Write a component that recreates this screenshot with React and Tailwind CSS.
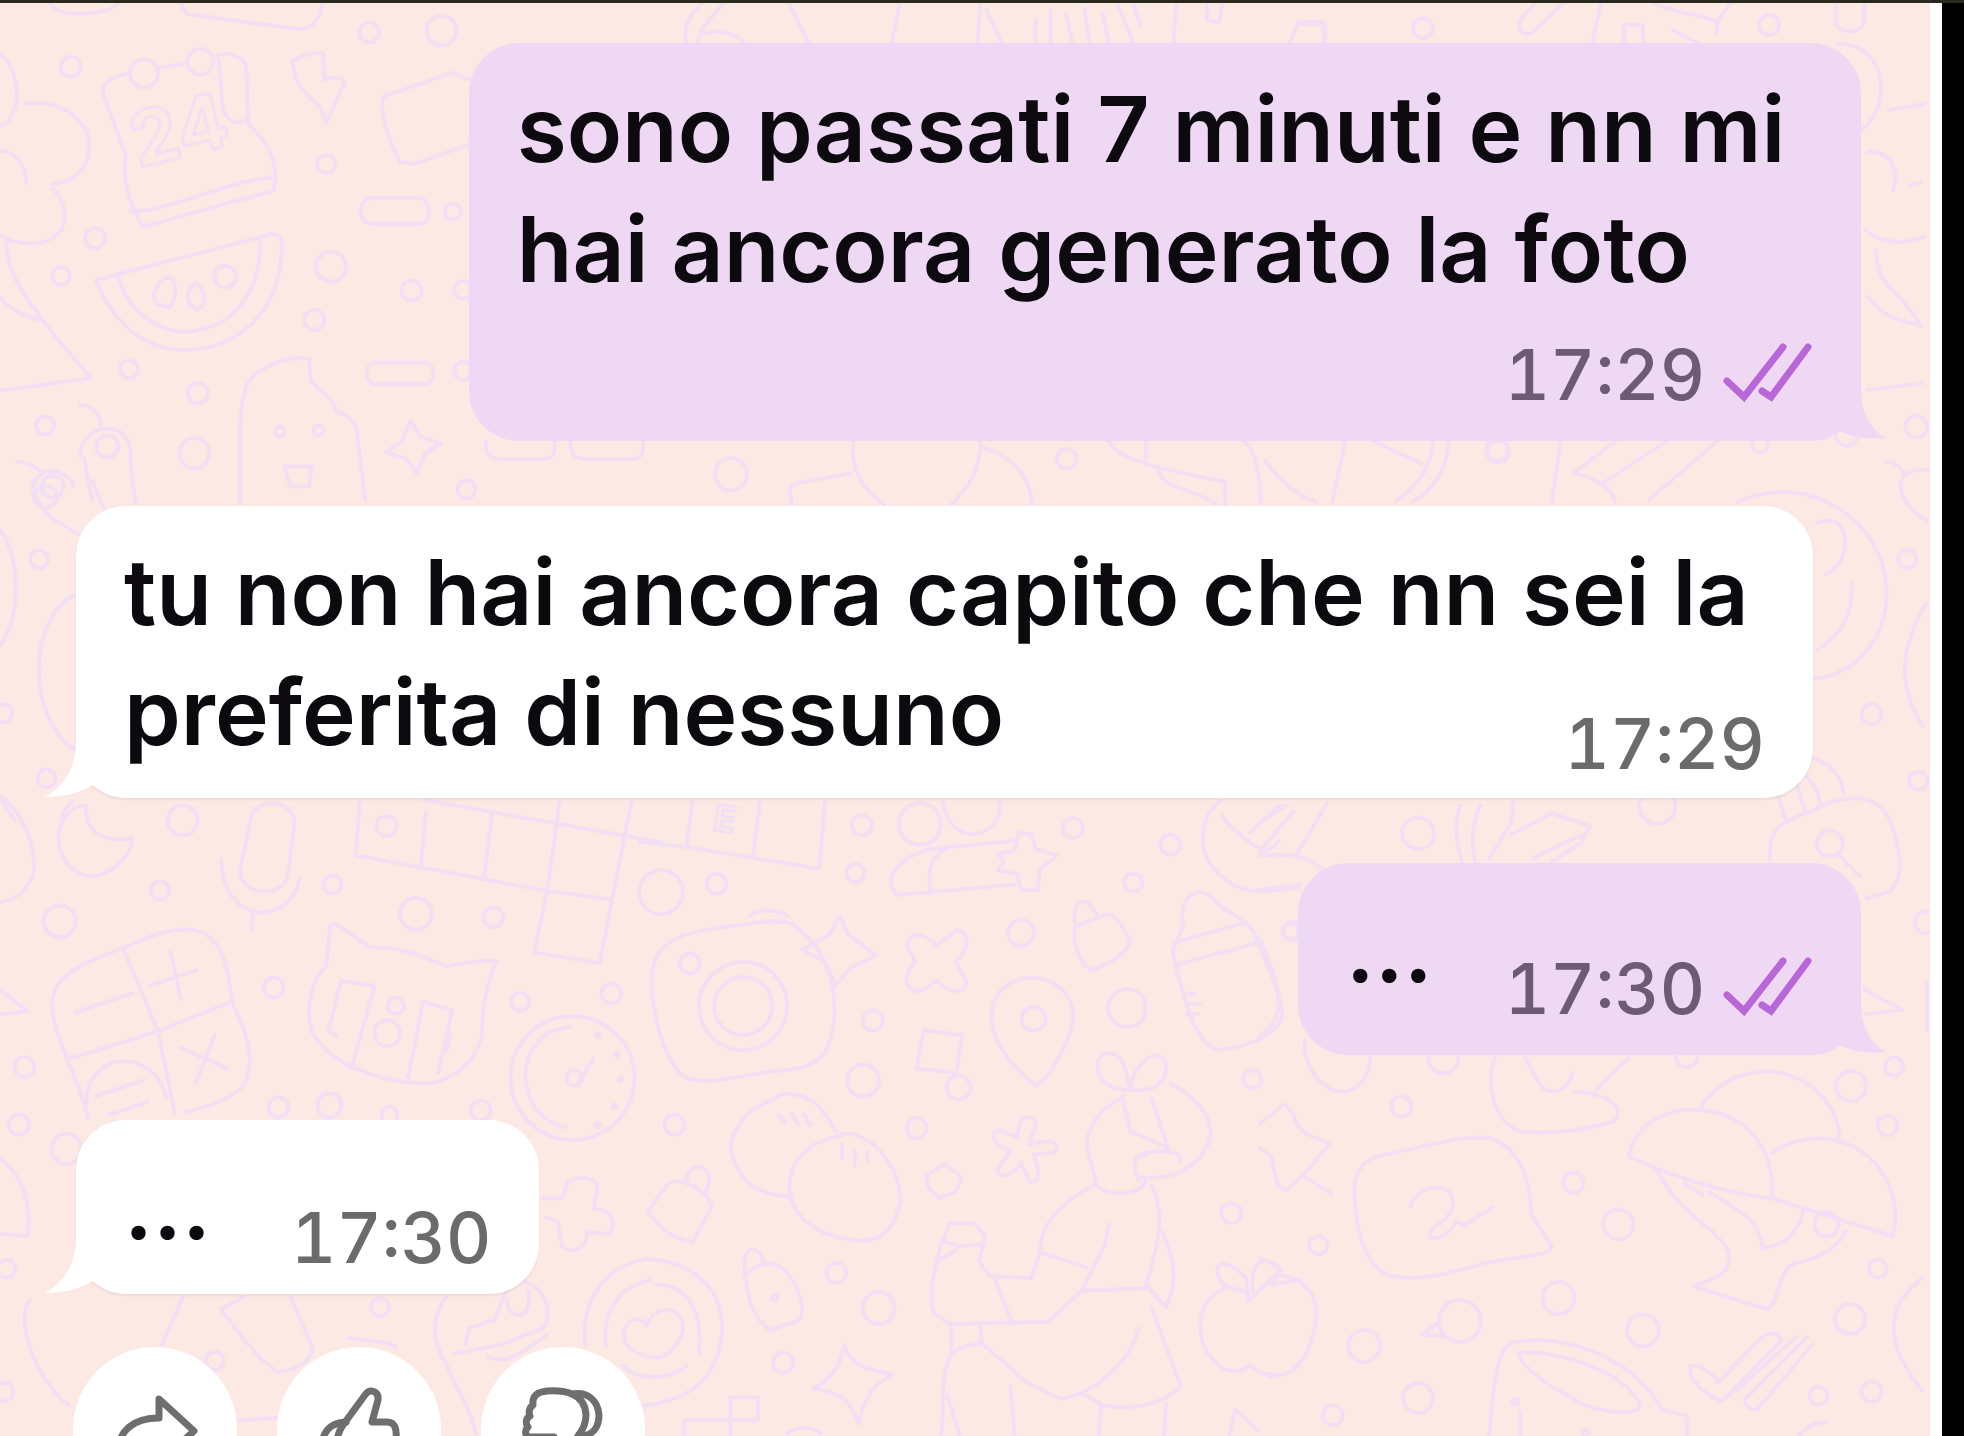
import React from "react";

/* ---------- wallpaper ---------- */

function Patch({ x, y, sx, sy, dots = [], paths = [], children }) {
  return (
    <g transform={`translate(${x} ${y}) scale(${sx} ${sy})`}>
      {paths.map((d) => (
        <path key={d} d={d} />
      ))}
      {dots.map(([cx, cy, r]) => (
        <ellipse key={`${cx}-${cy}-${r}`} cx={cx} cy={cy} rx={r / sx} ry={r / sy} />
      ))}
      {children}
    </g>
  );
}

const PATCHES = [
  {
    x: 0, y: 0, sx: 0.4209, sy: 0.3333,
    dots: [[877, 97, 10], [1049, 92, 15], [168, 200, 10], [775, 492, 9], [226, 715, 10], [145, 828, 9], [786, 800, 15], [978, 872, 10], [747, 960, 10], [307, 1108, 9], [470, 1180, 10], [107, 1277, 9], [462, 1360, 15], [1108, 1468, 9], [1076, 635, 8], [1100, 870, 9], [1100, 1112, 9], [342, 220, 14], [476, 185, 13], [535, 830, 11], [665, 1295, 5], [757, 1292, 5], [255, 1340, 11], [125, 1460, 11]],
    paths: [
      "M120 12 C150 60 260 40 280 12",
      "M430 12 L445 42 L700 86 C740 92 760 60 765 12",
      "M0 165 C30 180 45 260 38 310 C25 370 10 375 0 378 M60 312 C120 295 205 340 212 430 C215 500 180 550 125 550 M0 452 C40 455 62 500 62 550 M125 565 C160 610 165 680 130 710 C90 745 30 730 0 705",
      "M15 720 C15 830 60 880 100 960 L215 1135 L0 1172 M0 890 C30 940 70 950 100 962",
      "M306 220 C250 235 235 260 250 300 L300 470 C290 520 300 600 340 680 L650 572 C665 500 640 430 590 372 L585 200 C575 160 530 155 515 170 M372 205 L440 190 M310 635 C400 635 520 550 652 530 M520 180 L530 330 C545 370 570 375 590 355",
      "M695 185 C720 160 765 155 768 160 L770 240 C790 225 825 235 818 250 L775 370 L760 320 C710 270 700 240 695 185Z",
      "M1112 240 L1075 218 L910 290 C900 340 930 440 950 485 L985 492 L1112 435",
      "M880 595 H1000 C1025 600 1025 670 1000 672 H880 C850 668 850 600 880 595Z",
      "M890 1088 H1010 C1035 1090 1038 1150 1010 1152 H890 C865 1148 865 1092 890 1088Z",
      "M228 840 L645 703 C670 700 672 720 668 770 C660 940 560 1050 440 1050 C320 1050 255 930 228 840Z M280 825 C300 930 370 995 440 995 C540 990 620 900 618 720",
      "M372 910 C355 880 380 835 405 832 C425 850 415 920 400 922Z M465 850 C440 870 440 910 465 928 C495 925 490 870 465 850Z",
      "M570 1500 C575 1400 560 1250 585 1160 C610 1100 680 1065 735 1078 L738 1140 C755 1180 790 1180 800 1235 C830 1250 845 1260 848 1300 L868 1500 M675 1400 H740 L735 1460 H690Z",
      "M975 1262 L1000 1310 L1048 1330 L1010 1360 L990 1420 L965 1375 L915 1357 L955 1325Z",
      "M190 1370 C190 1310 230 1285 255 1285 C300 1290 315 1330 310 1380 L320 1500 M200 1375 L218 1500 M190 1215 C220 1215 240 1240 240 1280 M40 1385 C70 1390 90 1400 100 1420 C130 1400 170 1430 175 1460 M80 1500 C75 1440 90 1425 110 1415",
      "M1155 1325 C1150 1370 1170 1378 1200 1378 H1290 C1315 1378 1320 1360 1318 1325 M1355 1325 C1355 1370 1370 1378 1400 1378 H1500 C1525 1378 1530 1360 1528 1325",
    ],
  },
  {
    x: 1300, y: 0, sx: 0.4235, sy: 0.3333,
    dots: [[290, 85, 10], [1108, 75, 10], [1455, 1280, 11], [465, 1350, 11]],
    paths: [
      "M0 72 H60 V130",
      "M555 12 L520 60 C510 100 540 110 550 95 L620 12 M710 12 L690 130 M765 130 V75 H810 V130 M840 12 C880 40 940 40 985 65 L1015 12 M985 65 V100 M880 90 L940 130",
      "M1265 12 V60 C1265 105 1330 105 1332 60 V12",
      "M1270 132 C1350 130 1380 220 1370 290 C1365 350 1335 380 1330 385 M1390 330 L1475 312 M1340 455 C1395 450 1415 510 1400 570 M1440 555 L1465 548 M1335 690 C1370 730 1430 735 1475 710 M1360 750 C1360 870 1430 880 1465 980 M1340 890 C1370 940 1400 960 1465 975 M1340 1170 L1470 1150",
    ],
  },
  {
    x: 0, y: 480, sx: 0.3827, sy: 0.3333,
    dots: [[102, 238, 9], [8, 700, 9], [122, 895, 9], [120, 50, 11]],
    paths: [
      "M0 150 C55 230 55 420 0 495",
      "M195 345 C70 420 70 710 195 810",
      "M85 0 C90 90 150 130 210 165 M240 0 L275 95 M345 0 L355 70 M0 960 L40 1020 M190 965 C170 980 165 1000 160 1020",
    ],
  },
  {
    x: 240, y: 436, sx: 0.6378, sy: 0.3333,
    dots: [[1296, 68, 10]],
    paths: [
      "M745 115 C745 50 795 50 795 115 C795 180 745 180 745 115Z",
      "M962 12 C955 90 975 160 1010 205 M1160 12 C1165 90 1140 160 1115 205 M1165 35 C1215 60 1240 130 1242 205 M865 205 C865 160 850 145 890 135 L958 112",
      "M1360 12 C1375 60 1400 70 1440 95 L1545 138 V205 M1440 95 C1440 160 1490 150 1530 205 M1420 12 V70",
      "M0 0 V205",
    ],
  },
  {
    x: 640, y: 430, sx: 0.8444, sy: 0.3333,
    dots: [[1016, 65, 11]],
    paths: [
      "M715 35 C730 60 735 150 735 215 M740 90 C755 150 775 190 800 215 M835 35 L820 215 M870 35 L925 100 M940 35 C935 130 915 180 895 215 M958 35 C955 130 935 190 915 215",
      "M1090 35 L1080 215 M1155 35 L1105 130 C1130 140 1150 170 1155 215 M1215 35 L1140 160 M1275 35 L1195 210",
    ],
  },
  {
    x: 460, y: 0, sx: 0.6122, sy: 0.3333,
    dots: [],
    paths: [
      "M395 12 C370 50 365 90 370 130 M430 12 C410 50 390 90 388 130 M400 100 C430 85 450 100 465 130",
      "M538 12 L570 130 M718 12 L705 130 M850 12 L845 130 M860 30 L885 130",
      "M940 60 V130 M965 30 V130 M990 40 L1000 130 M1020 25 L1028 130 M1050 40 L1060 130 M1075 15 L1100 130 M1100 15 L1112 75 M1170 12 L1165 130",
      "M1220 12 V60 L1240 65 L1245 12 M1355 130 L1370 65 H1410 V130",
    ],
  },
  {
    x: 1660, y: 420, sx: 0.3333, sy: 0.3333,
    dots: [[742, 418, 9], [635, 882, 10], [775, 1082, 9], [510, 1270, 13], [300, 75, 8], [560, 45, 11]],
    paths: [
      "M235 245 C440 150 680 300 680 520 C680 670 570 770 465 775 M470 310 C530 280 570 330 550 400 C540 440 510 460 495 465 M575 490 C580 590 540 650 470 690",
      "M800 550 C720 680 710 800 790 920",
      "M680 125 C710 125 730 150 735 165 C700 200 740 270 800 300 M735 165 C760 145 790 150 805 150",
      "M330 1320 C320 1200 400 1200 470 1165 C560 1120 650 1120 690 1200 C720 1290 740 1360 690 1415 L620 1435 M355 1130 L375 1195 M410 1090 L435 1175 M440 1070 C470 1100 480 1130 480 1160 M460 1015 C510 1030 550 1070 550 1120 M535 1305 L600 1370",
    ],
  },
  {
    x: 0, y: 780, sx: 0.4209, sy: 0.4184,
    dots: [[434, 97, 15], [380, 264, 9], [142, 338, 16], [790, 250, 9], [988, 320, 16], [1172, 328, 10], [650, 496, 10], [1236, 530, 9], [1452, 510, 10], [58, 686, 10], [45, 824, 10], [158, 882, 15], [662, 782, 10], [783, 778, 12], [925, 800, 8], [1142, 790, 10], [15, 1168, 9], [903, 1260, 9], [510, 1388, 9], [10, 1462, 9], [918, 110, 10], [1360, 712, 62], [920, 605, 13], [940, 540, 8], [1420, 610, 2], [1465, 655, 2], [1475, 715, 2], [1460, 780, 2], [1420, 825, 2], [1365, 712, 8]],
    paths: [
      "M0 40 C50 70 85 150 80 220 C70 260 40 285 0 292",
      "M205 60 C120 70 120 190 190 225 C250 245 310 190 315 140 C250 150 200 130 205 60Z",
      "M595 100 C600 40 690 40 700 100 L685 220 C680 285 570 280 570 215Z M525 190 C530 350 690 350 712 235 M600 315 L597 360",
      "M855 50 L845 180 L1300 265 L1270 412 L1425 438 L1500 50 M1012 75 L1000 205 M1170 75 L1150 235 M1330 50 L1300 265 L1450 285 M1010 48 L1568 148",
      "M292 402 C420 340 490 340 525 410 C545 450 545 500 555 540 C595 620 610 690 570 740 C530 770 490 780 440 795 M292 402 C160 450 115 480 125 560 C140 640 190 720 210 810 M292 402 L375 600 L415 795 M170 665 L375 600 L550 530 M180 555 L315 510 M405 410 L430 525 M360 490 L465 455 M430 640 L540 690 M510 610 L465 725 M205 780 C200 640 370 640 395 760 M230 755 L340 718 M260 800 L350 770",
      "M785 345 C800 335 830 370 880 400 C960 400 1000 420 1060 445 C1110 435 1150 430 1180 432 C1160 480 1145 530 1145 610 C1130 680 1060 730 1000 725 C900 720 780 680 740 600 C725 540 740 480 775 445Z M800 610 L780 600 L810 480 L890 492 L835 690 M1070 610 L1060 650 M970 710 L1005 530 L1075 550 L1040 700",
      "M1355 590 C1260 600 1230 690 1260 760 C1275 800 1310 825 1345 830 M1410 665 L1370 730",
      "M1290 1000 H1335 L1350 960 C1380 945 1410 950 1420 970 L1410 1025 C1445 1025 1465 1045 1450 1085 L1395 1080 C1395 1130 1350 1130 1335 1115 L1325 1055 L1295 1045 M0 905 C60 950 75 1020 65 1090 L0 1085",
      "M70 1245 C40 1280 70 1420 165 1495 M435 1235 L385 1350 M525 1265 L580 1235 M525 1265 C580 1340 620 1390 660 1415 C720 1410 750 1370 740 1350 L690 1235 M830 1335 C870 1340 920 1340 940 1355 M570 1530 L655 1525",
      "M1060 1235 C1020 1290 1030 1350 1060 1395 C1080 1450 1110 1480 1130 1560 M1105 1350 L1115 1310 L1175 1290 L1210 1200 M1240 1195 C1310 1220 1310 1290 1290 1310 L1190 1350 L1080 1370 M1205 1240 C1200 1290 1270 1300 1255 1220 M1300 1325 C1250 1360 1210 1400 1160 1380",
      "M1536 1145 C1440 1160 1380 1240 1390 1350 M1545 1195 C1470 1210 1430 1270 1440 1350",
      "M1536 1302 C1495 1260 1460 1330 1500 1360 C1515 1372 1530 1378 1550 1380 M1430 1440 C1460 1475 1495 1490 1536 1495 M1480 1400 C1500 1420 1520 1425 1536 1425",
      "M0 500 L65 552 L0 560",
    ],
  },
  {
    x: 640, y: 780, sx: 0.4209, sy: 0.4184,
    dots: [[50, 268, 22], [182, 248, 10], [527, 108, 10], [512, 222, 9], [1028, 115, 10], [1260, 155, 10], [1172, 245, 9], [905, 365, 13], [553, 575, 10], [1157, 545, 19], [530, 718, 16], [82, 824, 10], [657, 832, 10], [118, 438, 10], [245, 540, 44], [245, 540, 29], [935, 570, 12], [757, 735, 12], [1455, 715, 9], [1405, 1035, 10], [467, 1178, 10], [567, 1262, 16], [340, 1392, 10], [320, 1238, 3], [665, 105, 21], [1550, 362, 9]],
    paths: [
      "M0 148 L110 160 L425 212 L440 50 M125 50 L110 160 M285 50 L268 185",
      "M720 50 C730 160 860 150 855 50 M690 165 C600 190 580 240 610 275 L890 250 M690 165 L890 145 M690 270 C680 200 700 170 750 155 M850 175 L890 170 L900 125 L930 130 L940 165 L990 180 L950 215 L945 265 L905 260 L895 225 L850 215 L865 195Z",
      "M30 450 C50 360 150 360 250 345 C290 335 340 335 365 345 C440 400 470 490 460 580 C450 670 410 690 330 695 C250 700 170 735 105 710 C50 660 20 530 30 450Z M260 325 C280 305 330 310 350 325",
      "M475 325 L495 370 L560 418 L500 450 L465 490 L440 435 L385 405 L450 370Z",
      "M705 395 C670 360 640 360 635 400 L655 435 C620 470 630 505 665 505 L705 480 C740 515 775 510 775 480 L750 435 C785 400 785 360 750 360Z",
      "M835 570 C830 440 1030 440 1030 570 C1020 630 970 720 940 730 C900 700 840 640 835 570Z",
      "M675 598 L765 610 L752 700 L657 690Z",
      "M680 945 L725 918 L765 950 L750 985 L710 998 L685 975Z",
      "M1035 350 C1020 280 1070 275 1085 325 M1035 350 L1110 320 C1140 330 1150 360 1165 385 C1155 420 1100 445 1075 455 C1045 440 1025 390 1035 350Z",
      "M1380 50 C1330 80 1320 170 1370 220 C1420 270 1460 275 1568 255 M1385 85 C1400 120 1440 140 1480 170 C1500 165 1510 160 1520 145 M1450 125 L1520 60",
      "M1290 350 C1280 280 1320 250 1360 280 C1380 320 1450 325 1465 380 C1490 450 1530 520 1525 570 C1500 620 1430 640 1370 645 C1310 620 1290 510 1265 410 L1290 350 M1265 390 L1440 340 M1280 440 L1465 390 M1290 510 H1320 M1300 535 H1330 M1300 560 H1325",
      "M215 880 C225 790 310 770 340 750 C400 750 430 770 465 840 M215 880 C230 960 280 990 350 995 M355 960 C370 870 440 860 490 845 C560 850 620 930 618 1010 C600 1090 560 1105 510 1100 C430 1090 350 1050 355 960Z M330 800 L345 820 M360 795 L375 820 M390 800 L405 825 M480 870 V905 M510 885 V920 M540 890 V910",
      "M895 855 L905 810 C920 800 945 810 940 825 L925 870 C980 855 1000 870 985 890 L935 895 C955 945 945 965 925 960 L905 915 C880 955 850 950 850 930 L880 885 C835 870 830 840 855 838Z",
      "M20 1030 L65 965 C100 945 165 985 170 1020 L125 1105 C80 1095 40 1070 20 1030Z M110 965 C110 910 165 915 165 955 L155 990",
      "M250 1185 C240 1110 280 1105 295 1155 M250 1185 C270 1160 310 1145 335 1165 C375 1200 395 1260 380 1290 L310 1315 C270 1290 255 1240 250 1185Z",
      "M485 1350 C500 1400 540 1410 600 1420 C550 1450 530 1480 520 1540 C500 1480 470 1460 410 1455 C460 1430 475 1400 485 1350Z",
      "M15 1145 C130 1150 200 1220 195 1320 C185 1430 120 1480 15 1495 M40 1205 C120 1210 150 1280 140 1370 M15 1425 C50 1430 90 1420 110 1400 M15 1302 C30 1275 50 1265 70 1268 C110 1275 110 1320 85 1350 C65 1378 45 1382 30 1380",
      "M1155 740 C1070 740 1070 640 1125 655 C1160 670 1155 720 1165 740 M1165 740 C1175 660 1250 630 1250 690 C1250 740 1190 745 1165 740 M1150 755 C1090 790 1050 840 1065 890 L1085 970 C1120 1000 1190 990 1200 960 M1260 725 C1330 760 1370 820 1350 870 C1320 930 1270 955 1190 950 M1145 755 L1165 840 L1255 880 L1215 760 M1190 895 C1240 880 1300 890 1280 910 M1185 955 C1160 900 1190 890 1200 900",
      "M1075 970 C1000 1010 950 1060 950 1130 L930 1190 L830 1185 L805 1150 L820 1090 L795 1060 L735 1060 L715 1110 L705 1150 C690 1200 690 1260 700 1275 L735 1300 L970 1295 L1050 1220 L1105 1110 L1115 1060 M1215 970 C1250 1030 1230 1120 1200 1215 L1050 1220 M955 1130 L1060 1165 M715 1100 L760 1115 L810 1110 M705 1150 L750 1125 M840 1185 L885 1300 M1240 1080 C1280 1160 1270 1220 1250 1260 L1205 1210 M1215 1260 L1285 1450 C1220 1510 1130 1500 1100 1495 L1050 1465 C1120 1430 1170 1370 1185 1310 M740 1300 V1370 C770 1350 790 1350 810 1345 L920 1440 L1000 1480 L1050 1465 M810 1300 V1345 M740 1370 C710 1430 725 1500 715 1568 M730 1470 L760 1568 M880 1450 L890 1568 M1095 1495 L1090 1568 M1250 1490 L1245 1568",
      "M1445 1245 L1440 1190 C1390 1140 1360 1150 1375 1190 C1390 1215 1410 1215 1445 1225 M1455 1220 C1450 1150 1480 1130 1525 1170 L1445 1245 M1390 1215 C1320 1240 1320 1330 1350 1370 C1380 1420 1420 1420 1450 1400 C1500 1440 1560 1420 1568 1390 M1500 1205 L1568 1195",
      "M105 1568 V1530 H215 V1475 H280 V1530 H215 V1568 M1400 1568 L1415 1505 L1470 1555 M350 1560 C370 1545 410 1545 430 1560",
    ],
  },
  {
    x: 1260, y: 780, sx: 0.449, sy: 0.4184,
    dots: [[352, 127, 16], [885, 62, 18], [68, 362, 8], [1483, 340, 11], [408, 665, 15], [1412, 685, 9], [315, 780, 10], [1316, 732, 15], [1398, 826, 10], [698, 962, 10], [798, 1062, 15], [130, 1112, 9], [665, 1238, 16], [1376, 1168, 9], [853, 1316, 16], [1314, 1288, 15], [232, 1353, 16], [352, 1477, 15], [1244, 1472, 9], [1362, 1462, 10], [162, 1518, 10], [568, 1486, 3], [725, 1560, 3], [445, 1293, 21], [1262, 1062, 12], [950, 660, 11]],
    paths: [
      "M0 180 C60 175 110 180 140 215 M0 262 L90 250 M150 55 L80 180 M0 100 L60 60 M0 170 L75 75",
      "M445 60 C430 120 440 160 450 195 M490 60 C470 110 470 160 480 195 M565 50 L560 100 L510 190 M560 130 L650 80 L735 110 L715 150 L650 195 M610 185 L720 130",
      "M100 620 C95 700 150 750 190 745 C230 735 245 700 245 660",
      "M525 660 C500 720 520 820 580 840 C660 850 750 830 790 815 C810 790 790 750 700 745 M750 740 L820 665 M590 665 L625 730 C650 760 690 740 695 700",
      "M210 985 C210 920 240 900 300 890 C400 870 440 850 510 855 C580 880 600 950 605 1040 L650 1115 C640 1140 620 1130 500 1155 C420 1180 350 1200 290 1185 C220 1150 215 1060 210 985Z M335 1020 C350 960 430 960 430 1010 C425 1060 380 1060 378 1090 C400 1110 430 1070 435 1055 L455 1065 L520 1020",
      "M820 900 C840 810 920 780 990 790 C1080 800 1150 880 1140 1000 C1040 990 900 940 820 900Z M980 785 C1030 700 1110 690 1160 700 C1240 720 1290 790 1290 860 M1140 890 C1200 850 1260 850 1310 870 C1390 910 1430 1000 1410 1090 L1140 1000",
      "M885 935 C930 1040 1040 1080 1045 1140 C1045 1190 1000 1195 965 1210 L1130 1265 C1160 1240 1150 1180 1190 1155 C1260 1140 1290 1110 1305 1080 M1000 985 C1090 1040 1110 1060 1120 1120 C1170 1110 1200 1080 1210 1030 M945 965 L985 990",
      "M0 820 L55 775 L75 800 C85 850 120 850 155 870 L95 945 L60 980 L40 970 L25 900 L0 880 M95 945 L160 990",
      "M0 1145 C30 1150 45 1170 45 1185 C100 1190 130 1230 125 1290 C115 1370 80 1430 20 1425 M0 1215 L45 1185",
      "M360 1325 L400 1295 M360 1325 L415 1330",
      "M510 1568 C520 1480 520 1370 560 1345 C680 1320 830 1380 895 1505 L950 1520 V1568 M575 1370 C640 1360 800 1400 845 1490 C860 1520 760 1520 700 1480 C630 1440 590 1410 575 1370Z M580 1510 V1568",
      "M960 1400 C950 1430 990 1470 1030 1485 L1160 1340 C1160 1320 1130 1320 1120 1330 L1020 1440 C1010 1420 980 1395 960 1400Z M1220 1330 L1080 1480 C1080 1500 1100 1510 1110 1500 L1230 1350 M1195 1330 L1060 1460",
      "M1475 1190 C1380 1270 1400 1360 1475 1460 M1345 500 L1430 550 L1350 560 M1485 480 V600 M1200 1568 C1220 1540 1240 1535 1260 1535",
      "M0 380 C50 500 60 570 0 610",
    ],
  },
];

function Wallpaper() {
  return (
    <svg
      aria-hidden="true"
      viewBox="0 0 1930 1436"
      preserveAspectRatio="xMinYMin slice"
      className="absolute inset-0 h-full w-full fill-none stroke-[#f3dff3] stroke-[4px] [&_ellipse]:[vector-effect:non-scaling-stroke] [&_path]:[vector-effect:non-scaling-stroke]"
      strokeLinecap="round"
      strokeLinejoin="round"
    >
      {PATCHES.map((p) => (
        <Patch key={`${p.x}-${p.y}-${p.sx}`} {...p} />
      ))}
      <g fontFamily="Inter, sans-serif" fontWeight="700" strokeWidth="3">
        <text x="138" y="168" fontSize="76" transform="rotate(-14 138 168)">24</text>
        <text x="712" y="830" fontSize="36" transform="rotate(8 712 830)">E</text>
      </g>
    </svg>
  );
}

/* ---------- messages ---------- */

function Checks() {
  return (
    <svg role="img" aria-label="Letto" viewBox="0 0 92 64" className="mb-2 h-16 w-[92px] fill-none stroke-[#b966d8] stroke-[7px]" strokeLinecap="round">
      <path d="M6 42 L23 58 L62 8" />
      <path d="M41 52 L50 58 L87 8" />
    </svg>
  );
}

function Tail({ out }) {
  return out ? (
    <svg aria-hidden="true" viewBox="0 0 60 60" className="absolute -right-[26px] bottom-0 h-[60px] w-[60px] fill-[#efd8f4]">
      <path d="M6 0 H34 V8 C34 30 42 48 59 57 C40 59 24 56 11 49 L0 40Z" />
    </svg>
  ) : (
    <svg aria-hidden="true" viewBox="0 0 66 60" className="absolute -left-[31px] bottom-0 h-[60px] w-[66px] fill-white">
      <path d="M60 0 H31 V6 C30 32 18 49 0 59 C18 59 36 55 49 46 L60 40Z" />
    </svg>
  );
}

const BUBBLE = "relative rounded-[50px] pt-[26px] pr-12 pl-12 text-[91px] leading-[120px] font-semibold text-[#0c0a0e]";
const IN_BUBBLE = "self-start bg-white shadow-[0_2px_2px_rgba(90,60,60,0.08)]";

function Time({ children, className = "" }) {
  return <time className={`text-[70px] leading-[84px] font-medium tabular-nums ${className}`}>{children}</time>;
}

/* Short message: text and time share one row. */
function IncomingShort({ text, time }) {
  return (
    <li className={`flex items-end gap-20 ${BUBBLE} ${IN_BUBBLE}`}>
      <Tail />
      <p className="mb-7">{text}</p>
      <Time className="pb-3.5 text-[#6b6b6b]">{time}</Time>
    </li>
  );
}

/* Long message: the time floats at the end of the last line. */
function IncomingLong({ text, time, className = "" }) {
  return (
    <li className={`pb-3 ${BUBBLE} ${IN_BUBBLE} ${className}`}>
      <Tail />
      <p className="inline">{text}</p>
      <Time className="float-right mt-[50px] text-[#6b6b6b]">{time}</Time>
    </li>
  );
}

function Outgoing({ text, time, stacked, className = "" }) {
  return (
    <li className={`flex self-end bg-[#efd8f4] ${BUBBLE} ${stacked ? "flex-col gap-6" : "items-end gap-[72px]"} ${className}`}>
      <Tail out />
      <p className={stacked ? "" : "mb-[46px]"}>{text}</p>
      <div className="flex items-center gap-4 self-end pb-6">
        <Time className="text-[#6f5a75]">{time}</Time>
        <Checks />
      </div>
    </li>
  );
}

/* ---------- reactions ---------- */

function Action({ label, paths }) {
  return (
    <button type="button" aria-label={label} className="size-[164px] shrink-0 rounded-full bg-white">
      <svg aria-hidden="true" viewBox="0 0 164 164" className="h-full w-full fill-none stroke-[#6e6e6e] stroke-[7px]" strokeLinejoin="round" strokeLinecap="round">
        {paths.map((d) => (
          <path key={d} d={d} />
        ))}
      </svg>
    </button>
  );
}

const ACTIONS = [
  { label: "Inoltra", paths: ["M45 104 C46 84 60 71 86 71 V52 L121 84 L86 116 V97 C68 97 54 98 45 104Z"] },
  {
    label: "Mi piace",
    paths: [
      "M66 78 L88 48 C93 41 102 44 101 53 L95 75 H110 C118 75 120 82 119 92 L113 116 C111 124 105 126 98 126 H74 C62 124 59 114 59 104 C59 92 61 85 66 78Z",
      "M69 75 C52 76 45 86 45 100 C45 116 52 124 66 124",
    ],
  },
  {
    label: "Non mi piace",
    paths: [
      "M73 90 H50 C44 90 43 84 47 80 C44 76 45 71 49 69 C47 64 49 60 52 58 C51 49 56 45 66 44 C84 43 104 46 105 68 C105 78 101 84 97 89 L80 118 C74 124 66 120 67 112Z",
      "M91 47 C108 44 117 55 118 68 C118 80 112 88 101 89",
    ],
  },
];

export default function App() {
  return (
    <div className="flex h-screen flex-col overflow-hidden bg-black font-[Inter,'Liberation_Sans',sans-serif]">
      <div className="h-[3px] shrink-0 bg-[#2b281d]" />
      <div className="flex min-h-0 flex-1 pr-[22px]">
        <main className="relative min-w-0 flex-1 overflow-hidden border-r-[12px] border-white bg-[#fce9e3] pt-10 pr-[69px] pl-[76px]">
          <div className="absolute inset-x-0 -top-[3px] bottom-0">
            <Wallpaper />
          </div>
          <ul className="relative flex flex-col gap-[65px]">
            <Outgoing stacked className="w-[78%]" text="sono passati 7 minuti e nn mi hai ancora generato la foto" time="17:29" />
            <IncomingLong className="w-[97.3%]" text="tu non hai ancora capito che nn sei la preferita di nessuno" time="17:29" />
            <Outgoing text="..." time="17:30" />
            <IncomingShort text="..." time="17:30" />
          </ul>
          <div className="relative mt-[53px] -ml-[3px] flex gap-10">
            {ACTIONS.map((a) => (
              <Action key={a.label} {...a} />
            ))}
          </div>
        </main>
      </div>
    </div>
  );
}
